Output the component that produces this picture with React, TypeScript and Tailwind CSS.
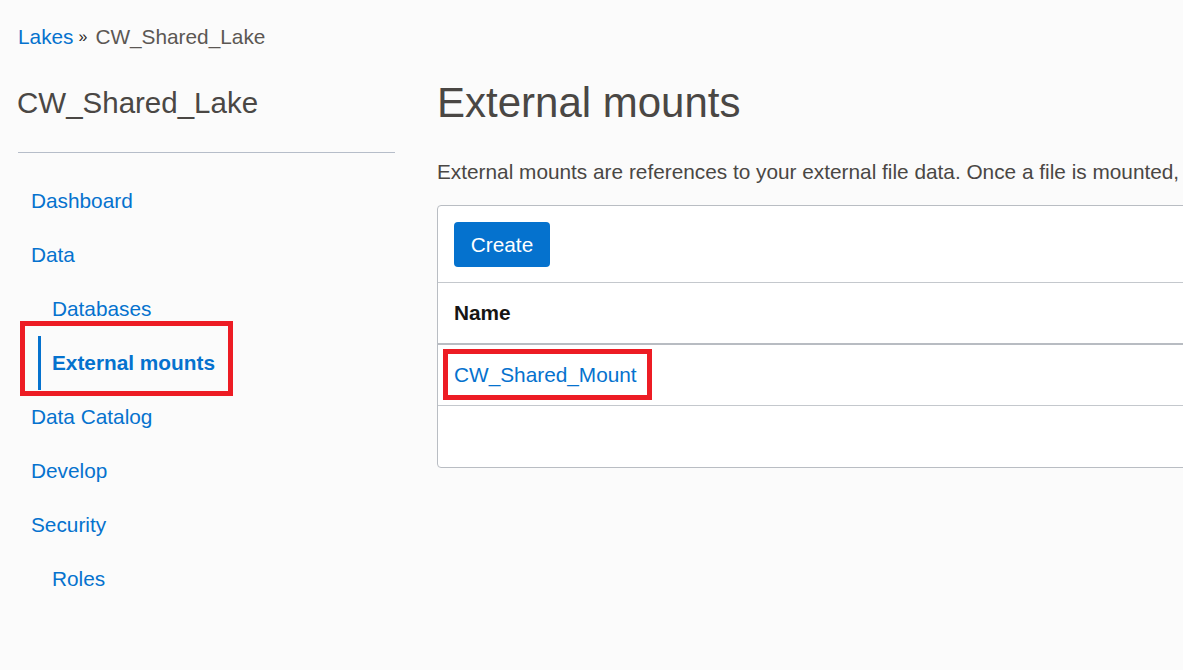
export default function App() {
  const nav = [
    { label: 'Dashboard', sub: false },
    { label: 'Data', sub: false },
    { label: 'Databases', sub: true },
    { label: 'External mounts', sub: true, active: true },
    { label: 'Data Catalog', sub: false },
    { label: 'Develop', sub: false },
    { label: 'Security', sub: false },
    { label: 'Roles', sub: true },
  ]

  return (
    <div
      className="h-[670px] w-[1183px] overflow-hidden bg-[#fbfbfb] text-[20.8px] text-[#4a4744]"
      style={{ fontFamily: '"Liberation Sans", Arial, sans-serif' }}
    >
      {/* Breadcrumb */}
      <div className="pl-[18px] pt-[24px] leading-[26px] flex items-center">
        <a className="text-[#0572ce]">Lakes</a>
        <span className="mx-[5px] text-[16px] text-[#2a2826]">»</span>
        <span className="ml-[3px] text-[#5b5753]">CW_Shared_Lake</span>
      </div>

      <div className="mt-[28px] flex">
        {/* Sidebar */}
        <aside className="ml-[17px] w-[378px] shrink-0">
          <h2 className="mt-[7px] text-[29.5px] leading-[36px] text-[#4a4744]">CW_Shared_Lake</h2>
          <div className="ml-[1px] mt-[31px] border-t border-[#b6bdc9]" />
          <nav className="mt-[21px]">
            {nav.map((item) =>
              item.active ? (
                <div key={item.label} className="relative h-[54px]">
                  <div className="ml-[21px] flex h-full items-center border-l-[3px] border-[#0572ce] pl-[11px]">
                    <a className="font-bold text-[#0572ce]">{item.label}</a>
                  </div>
                  <div className="absolute left-[3px] top-[-15px] h-[75px] w-[213px] border-[5px] border-[#ed1c24]" />
                </div>
              ) : (
                <div
                  key={item.label}
                  className={`flex h-[54px] items-center ${item.sub ? 'pl-[35px]' : 'pl-[14px]'}`}
                >
                  <a className="text-[#0572ce]">{item.label}</a>
                </div>
              )
            )}
          </nav>
        </aside>

        {/* Main */}
        <main className="ml-[42px] min-w-0 flex-1">
          <h1 className="text-[42px] leading-[50px] text-[#4a4744]">External mounts</h1>
          <p className="mt-[31px] whitespace-nowrap leading-[26px] text-[#4a4744]">
            External mounts are references to your external file data. Once a file is mounted,
          </p>

          <div className="mt-[20px] w-[900px] rounded-[4px] border border-[#b9bdc3] bg-white">
            <div className="border-b border-[#c4c8cd] pb-[15px] pl-[16px] pt-[16px]">
              <button className="h-[45px] w-[96px] rounded-[4px] bg-[#0572ce] text-white">Create</button>
            </div>
            <div className="flex h-[62px] items-center border-b-2 border-[#b8bcc2] pl-[16px]">
              <span className="font-bold text-[#161513]">Name</span>
            </div>
            <div className="relative flex h-[61px] items-center border-b border-[#c4c8cd] pl-[16px]">
              <a className="text-[#0572ce]">CW_Shared_Mount</a>
              <div className="absolute left-[5px] top-[4px] h-[51px] w-[209px] border-[5px] border-[#ed1c24]" />
            </div>
            <div className="h-[61px]" />
          </div>
        </main>
      </div>
    </div>
  )
}
